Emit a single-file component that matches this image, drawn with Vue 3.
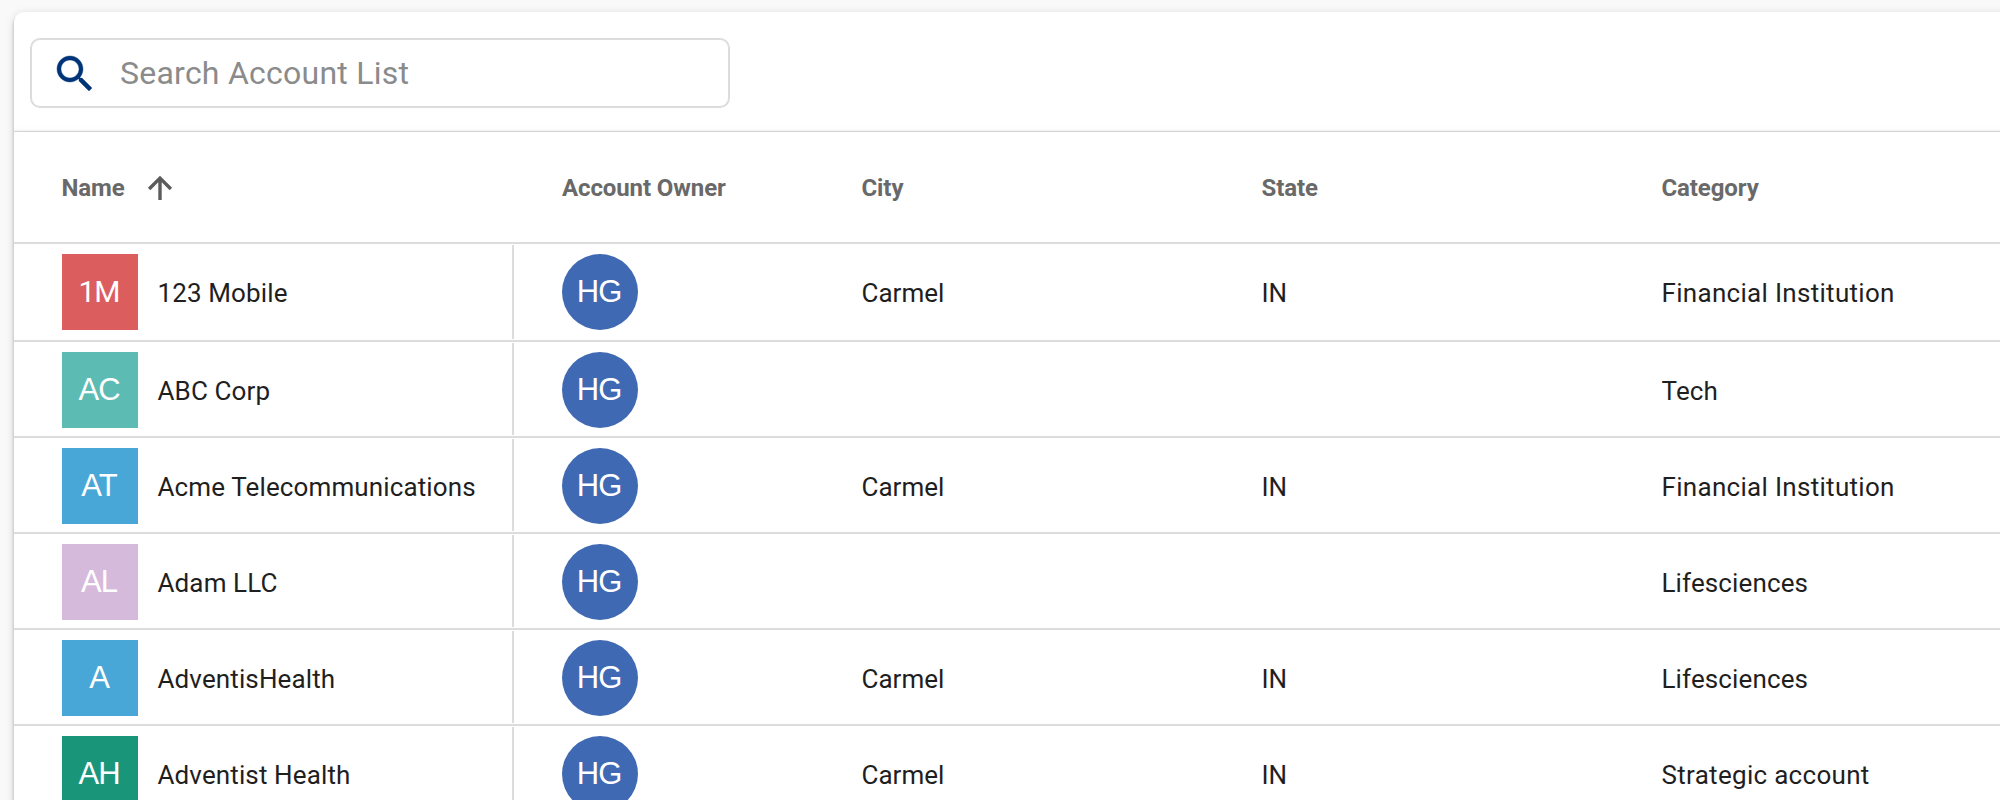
<script setup>
const accounts = [
  { initials: '1M', tone: 'red', name: '123 Mobile', owner: 'HG', city: 'Carmel', state: 'IN', category: 'Financial Institution' },
  { initials: 'AC', tone: 'teal', name: 'ABC Corp', owner: 'HG', city: '', state: '', category: 'Tech' },
  { initials: 'AT', tone: 'sky', name: 'Acme Telecommunications', owner: 'HG', city: 'Carmel', state: 'IN', category: 'Financial Institution' },
  { initials: 'AL', tone: 'lilac', name: 'Adam LLC', owner: 'HG', city: '', state: '', category: 'Lifesciences' },
  { initials: 'A', tone: 'sky', name: 'AdventisHealth', owner: 'HG', city: 'Carmel', state: 'IN', category: 'Lifesciences' },
  { initials: 'AH', tone: 'green', name: 'Adventist Health', owner: 'HG', city: 'Carmel', state: 'IN', category: 'Strategic account' },
]
</script>

<template>
  <main class="page">
    <section class="card">
      <div class="toolbar">
        <label class="search">
          <svg class="search-icon" viewBox="0 0 24 24" aria-hidden="true">
            <path d="M15.5 14h-.79l-.28-.27C15.41 12.59 16 11.11 16 9.5 16 5.91 13.09 3 9.5 3S3 5.91 3 9.5 5.91 16 9.5 16c1.61 0 3.09-.59 4.23-1.57l.27.28v.79l5 4.99L20.49 19l-4.99-5zm-6 0C7.01 14 5 11.99 5 9.5S7.01 5 9.5 5 14 7.01 14 9.5 11.99 14 9.5 14z" />
          </svg>
          <input class="search-input" type="text" placeholder="Search Account List" />
        </label>
      </div>

      <div class="table">
        <div class="head grid">
          <div class="name-head">
            <span>Name</span>
            <svg class="arrow" viewBox="0 0 24 24" aria-hidden="true">
              <path d="M12 24V2.5M1.1 13 12 2.1 22.9 13" />
            </svg>
          </div>
          <div class="owner">Account Owner</div>
          <div>City</div>
          <div>State</div>
          <div>Category</div>
        </div>
        <div v-for="a in accounts" :key="a.name" class="row grid">
          <div class="name">
            <span class="tile" :class="[a.tone, { numeric: /\d/.test(a.initials) }]">{{ a.initials }}</span>
            <span class="label">{{ a.name }}</span>
          </div>
          <div class="owner"><span class="tile round">{{ a.owner }}</span></div>
          <div class="label">{{ a.city }}</div>
          <div class="label">{{ a.state }}</div>
          <div class="label category" :class="{ wide: a.category.includes(' ') }">{{ a.category }}</div>
        </div>
      </div>
    </section>
  </main>
</template>

<style>
body {
  background: #f9f9f9;
}
</style>

<style scoped>
* {
  box-sizing: border-box;
}
.page {
  height: 800px;
  overflow: hidden;
  padding: 12px 0 0 14px;
  background: #f9f9f9;
  font-family: Roboto, "Liberation Sans", sans-serif;
  color: #1f1f1f;
}
.card {
  width: 2100px;
  height: 900px;
  border-radius: 10px;
  background: #fff;
  box-shadow: 0 2px 2px rgba(0, 0, 0, 0.16), 0 4px 4px rgba(0, 0, 0, 0.14), 0 2px 10px rgba(0, 0, 0, 0.14);
}
.toolbar {
  height: 120px;
  padding: 26px 16px 0;
  overflow: hidden;
}
.search {
  display: flex;
  align-items: center;
  width: 700px;
  height: 70px;
  padding: 2px 18px 0 19px;
  border: 2px solid #dcdcdc;
  border-radius: 10px;
}
.search-icon {
  flex: none;
  width: 48px;
  height: 48px;
  fill: #003478;
  stroke: #003478;
  stroke-width: 0.2;
}
.search-input {
  flex: 1;
  height: 44px;
  margin: 0 0 3px 21px;
  padding: 0;
  border: 0;
  outline: 0;
  background: none;
  font: 400 32px/44px Roboto, "Liberation Sans", sans-serif;
  letter-spacing: 0.24px;
}
.search-input::placeholder {
  color: #8b8b8b;
  opacity: 1;
}
.table {
  clip-path: inset(-8px 0 0 0);
  background: #fff;
  box-shadow: 0 -1px 1px rgba(0, 0, 0, 0.14), 0 2px 8px rgba(0, 0, 0, 0.12);
}
.grid {
  display: grid;
  grid-template-columns: 500px 347.5px 400px 400px 1fr;
}
.head {
  height: 112px;
  align-items: center;
  padding-top: 2px;
  border-bottom: 2px solid #dcdcdc;
  font-size: 24px;
  font-weight: 700;
  letter-spacing: -0.1px;
  color: #696969;
}
.name-head {
  display: flex;
  align-items: center;
  padding-left: 47.5px;
}
.arrow {
  width: 24px;
  height: 24px;
  margin-left: 23.5px;
  overflow: visible;
  fill: none;
  stroke: #5c5c5c;
  stroke-width: 3.4;
}
.row {
  height: 96px;
  border-bottom: 2px solid #dcdcdc;
}
.head + .row {
  height: 98px;
}
.name {
  display: flex;
  align-items: flex-start;
  gap: 19.5px;
  margin: 1px 0;
  padding: 9px 0 0 48px;
  border-right: 2px solid #dcdcdc;
}
.owner {
  padding-left: 48px;
}
.row .owner {
  padding-top: 10px;
}
.label {
  font-size: 26px;
  line-height: 76px;
  white-space: nowrap;
}
.row > .label {
  padding-top: 11px;
}
.name .label {
  padding-top: 1px;
  letter-spacing: 0.12px;
}
.category {
  letter-spacing: 0.12px;
}
.category.wide {
  letter-spacing: 0.3px;
}
.tile {
  display: block;
  flex: none;
  width: 76px;
  height: 76px;
  padding-right: 2px;
  font: 400 31px/76px "Liberation Sans", Arial, sans-serif;
  letter-spacing: -1px;
  text-align: center;
  color: #fff;
}
.numeric {
  font-family: Roboto, sans-serif;
  font-size: 30px;
}
.round {
  border-radius: 50%;
  background: #4069b4;
}
.red { background: #db5d5e; }
.teal { background: #5cbbb2; }
.sky { background: #49a7d7; }
.lilac { background: #d6badb; }
.green { background: #19967a; }
</style>
